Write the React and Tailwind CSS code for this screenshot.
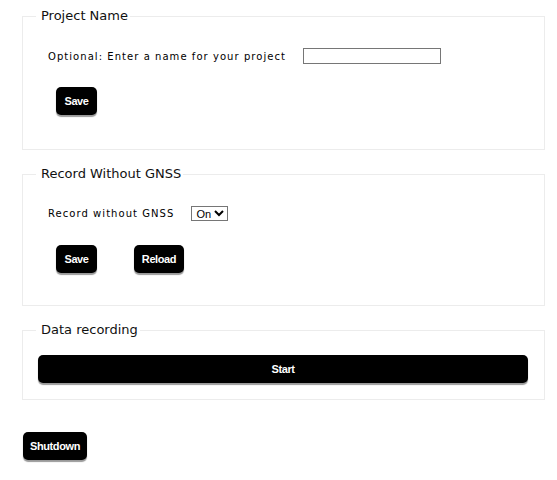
import { useState } from 'react';

const Btn = ({ children, className = '' }) => (
  <button
    className={`h-[28px] rounded-[5px] bg-black px-[7px] text-[11px] font-bold tracking-[-0.4px] text-white shadow-[0_2px_1px_#9a9a9a] font-['Liberation_Sans',Arial,sans-serif] ${className}`}
  >
    {children}
  </button>
);

const Section = ({ title, children, className = '' }) => (
  <fieldset className={`w-[523px] border border-[#ececec] pl-[13px] ${className}`}>
    <legend className="pl-[5px] pr-[2px] text-[13px] leading-[18px] text-[#111] font-['DejaVu_Sans',Verdana,sans-serif]">
      {title}
    </legend>
    {children}
  </fieldset>
);

export default function App() {
  const [name, setName] = useState('');
  const [gnss, setGnss] = useState('On');

  return (
    <div className="min-h-[480px] bg-white pl-[22px] pt-[7px] font-['DejaVu_Sans',Verdana,sans-serif] text-black">
      {/* Project name */}
      <Section title="Project Name" className="pb-[34px]">
        <div className="mt-[23px] flex h-[16px] items-center pl-[12px]">
          <label className="text-[10px] tracking-[1.05px]">Optional: Enter a name for your project</label>
          <input
            value={name}
            onChange={(e) => setName(e.target.value)}
            className="ml-[17px] h-[16px] w-[138px] border border-[#767676] bg-white"
          />
        </div>
        <div className="mt-[23px] pl-[20px]">
          <Btn className="w-[41px]">Save</Btn>
        </div>
      </Section>

      {/* Record without GNSS */}
      <Section title="Record Without GNSS" className="mt-[15px] pb-[32px]">
        <div className="mt-[22px] flex h-[16px] items-center pl-[12px]">
          <label className="text-[10px] tracking-[1.05px]">Record without GNSS</label>
          <select
            value={gnss}
            onChange={(e) => setGnss(e.target.value)}
            className="ml-[17px] h-[15px] border border-[#767676] bg-white p-0 text-[11px] leading-[13px] font-['Liberation_Sans',Arial,sans-serif]"
          >
            <option>On</option>
            <option>Off</option>
          </select>
        </div>
        <div className="mt-[24px] flex gap-[37px] pl-[20px]">
          <Btn className="w-[41px]">Save</Btn>
          <Btn className="w-[50px]">Reload</Btn>
        </div>
      </Section>

      {/* Data recording */}
      <Section title="Data recording" className="mt-[15px] pb-[16px] pr-[16px]">
        <div className="mt-[16px] pl-[2px]">
          <Btn className="w-full">Start</Btn>
        </div>
      </Section>

      <div className="mt-[32px] pl-[1px]">
        <Btn className="w-[64px]">Shutdown</Btn>
      </div>
    </div>
  );
}
